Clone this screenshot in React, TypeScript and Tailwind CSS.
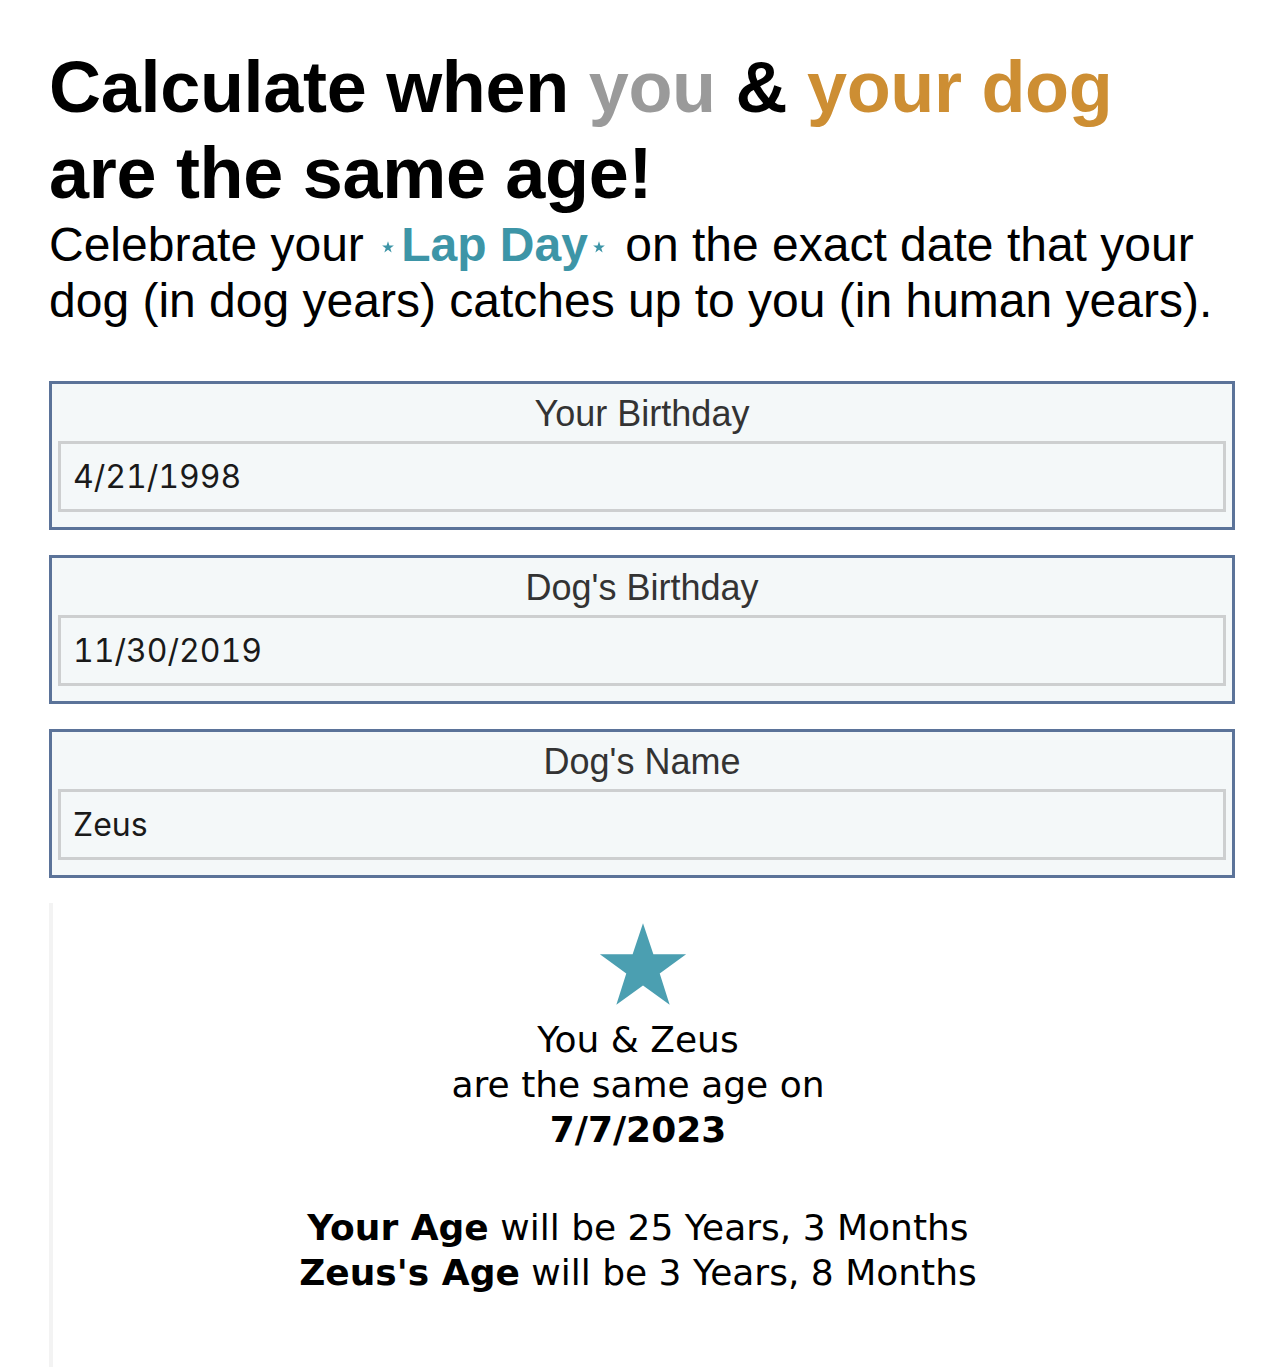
import type { ReactNode } from "react";

const SANS = "font-['Liberation_Sans',Arial,sans-serif]";
const VERDANA = "font-['DejaVu_Sans',Verdana,sans-serif]";

function Star({ className }: { className?: string }) {
  return (
    <svg viewBox="0 0 100 95" className={className} aria-hidden>
      <polygon
        points="50,0 61.8,35.3 99,35.3 69,57.2 80.3,92.7 50,70.9 19.7,92.7 31,57.2 1,35.3 38.2,35.3"
        fill="currentColor"
      />
    </svg>
  );
}

function Field({ label, value }: { label: string; value: string }) {
  return (
    <div className="border-[3px] border-[#5b7399] bg-[#f4f8f9] px-[6px] pb-[15px] pt-[10px]">
      <div className={`${SANS} text-center text-[36px] leading-[40px] text-[#333]`}>
        {label}
      </div>
      <div className="mt-[7px] flex h-[71px] items-center border-[3px] border-[#cdcfd0] bg-[#f4f8f9] px-[12px]">
        <span className="font-['Inter',sans-serif] text-[32px] tabular-nums text-[#1a1a1a]">
          {value}
        </span>
      </div>
    </div>
  );
}

function Line({ children }: { children: ReactNode }) {
  return <div className="whitespace-nowrap">{children}</div>;
}

export default function App() {
  return (
    <div className="min-h-[1367px] bg-white px-[49px] pt-[44px]">
      <h1 className={`${SANS} text-[72px] font-bold leading-[86px] tracking-[-0.3px] text-black`}>
        Calculate when <span className="text-[#9a9a9a]">you</span> &amp;{" "}
        <span className="text-[#cd8e33]">your dog</span>
        <br />
        are the same age!
      </h1>
      <p className={`${SANS} mt-[1px] text-[48px] leading-[56px] text-black`}>
        Celebrate your{" "}
        <span className="font-bold text-[#3d95a7]">
          <Star className="ml-[5px] mr-[7px] inline-block h-[12px] w-[12px] align-[8px]" />
          Lap Day
          <Star className="ml-[5px] mr-[7px] inline-block h-[12px] w-[12px] align-[8px]" />
        </span>{" "}
        on the exact date that your dog (in dog years) catches up to you (in
        human years).
      </p>

      <div className="mt-[52px] flex flex-col gap-[25px]">
        <Field label="Your Birthday" value="4/21/1998" />
        <Field label="Dog's Birthday" value="11/30/2019" />
        <Field label="Dog's Name" value="Zeus" />
      </div>

      <div
        className={`${VERDANA} mt-[25px] flex min-h-[470px] flex-col items-center border-l-[4px] border-[#f3f3f3] pr-[12px] pt-[20px] text-center text-[36px] leading-[45px] text-black`}
      >
        <Star className="ml-[10px] h-[84px] w-[88px] text-[#4b9fb1]" />
        <div className="mt-[10px]">
          <Line>You &amp; Zeus</Line>
          <Line>are the same age on</Line>
          <Line>
            <b>7/7/2023</b>
          </Line>
          <div className="h-[53px]" />
          <Line>
            <b>Your Age</b> will be 25 Years, 3 Months
          </Line>
          <Line>
            <b>Zeus's Age</b> will be 3 Years, 8 Months
          </Line>
        </div>
      </div>
    </div>
  );
}
